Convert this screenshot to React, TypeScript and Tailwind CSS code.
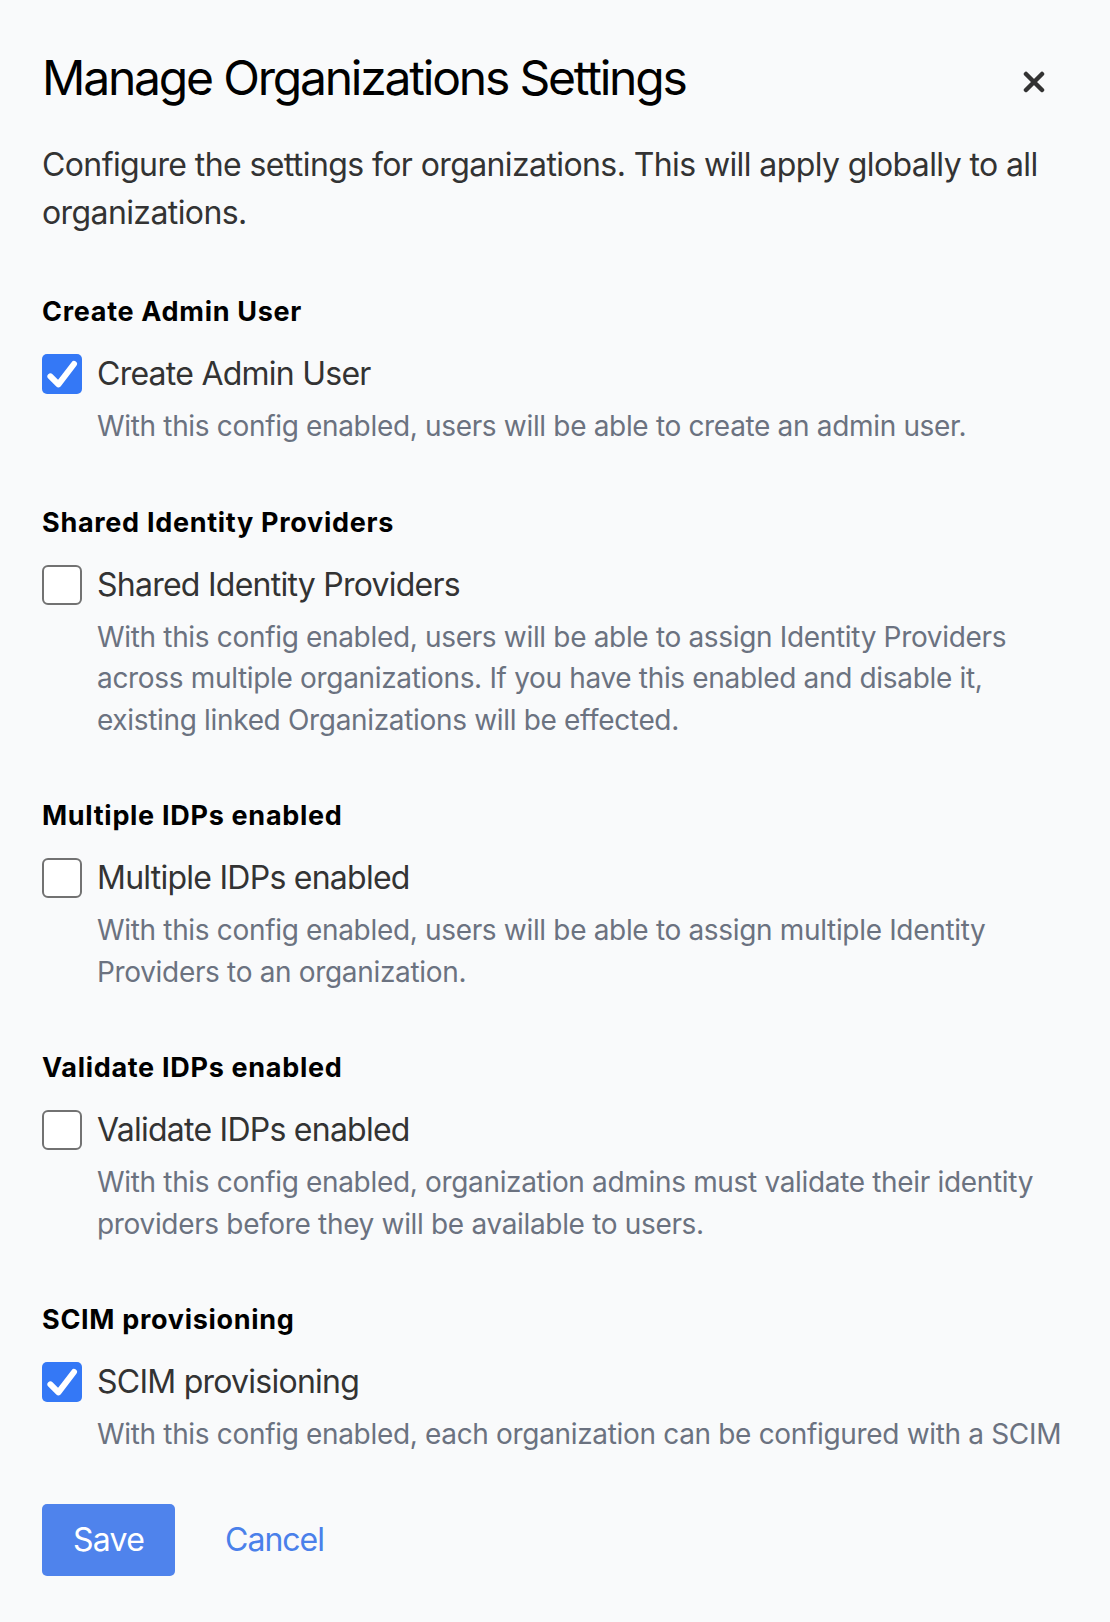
import { useState } from 'react';

interface Setting {
  key: string;
  title: string;
  description: string;
}

const settings: Setting[] = [
  {
    key: 'createAdminUser',
    title: 'Create Admin User',
    description: 'With this config enabled, users will be able to create an admin user.',
  },
  {
    key: 'sharedIdentityProviders',
    title: 'Shared Identity Providers',
    description:
      'With this config enabled, users will be able to assign Identity Providers across multiple organizations. If you have this enabled and disable it, existing linked Organizations will be effected.',
  },
  {
    key: 'multipleIdps',
    title: 'Multiple IDPs enabled',
    description:
      'With this config enabled, users will be able to assign multiple Identity Providers to an organization.',
  },
  {
    key: 'validateIdps',
    title: 'Validate IDPs enabled',
    description:
      'With this config enabled, organization admins must validate their identity providers before they will be available to users.',
  },
  {
    key: 'scimProvisioning',
    title: 'SCIM provisioning',
    description:
      'With this config enabled, each organization can be configured with a SCIM endpoint to provision users and groups.',
  },
];

function Checkbox({ checked, onToggle }: { checked: boolean; onToggle: () => void }) {
  if (checked) {
    return (
      <button
        type="button"
        onClick={onToggle}
        className="flex h-[40px] w-[40px] shrink-0 items-center justify-center rounded-[5px] bg-[#3478f6]"
      >
        <svg viewBox="0 0 20 20" className="h-[40px] w-[40px]" fill="none">
          <path d="M4.2 11.2 L8.2 15.2 L16 5" stroke="white" strokeWidth="3" strokeLinecap="round" strokeLinejoin="round" />
        </svg>
      </button>
    );
  }
  return (
    <button
      type="button"
      onClick={onToggle}
      className="h-[40px] w-[40px] shrink-0 rounded-[6px] border-2 border-[#727272] bg-white"
    />
  );
}

export default function App() {
  const [values, setValues] = useState<Record<string, boolean>>({
    createAdminUser: true,
    sharedIdentityProviders: false,
    multipleIdps: false,
    validateIdps: false,
    scimProvisioning: true,
  });

  const toggle = (key: string) => setValues((v) => ({ ...v, [key]: !v[key] }));

  return (
    <div className="flex h-[1622px] flex-col bg-[#f9fafb] px-[42px] font-['Inter',sans-serif]">
      <div className="flex items-center justify-between pt-[50px]">
        <h1 className="text-[48px] leading-[56px] tracking-[-2.2px] text-black">Manage Organizations Settings</h1>
        <button type="button" className="mr-[23px] mt-2 text-[#333]">
          <svg viewBox="0 0 22 22" className="h-[22px] w-[22px]" fill="none">
            <path d="M3 3 L19 19 M19 3 L3 19" stroke="currentColor" strokeWidth="4.5" strokeLinecap="round" />
          </svg>
        </button>
      </div>

      <div className="min-h-0 flex-1 overflow-hidden">
        <p className="mt-[35px] text-[32px] leading-[48px] tracking-[-0.6px] text-[#333]">
          Configure the settings for organizations. This will apply globally to all organizations.
        </p>

        {settings.map((setting) => (
          <div key={setting.key} className="mt-[57px]">
            <h3 className="text-[27px] font-bold leading-[36px] tracking-[0.7px] text-black">{setting.title}</h3>
            <div className="mt-5 flex h-[48px] items-center gap-[15px]">
              <Checkbox checked={values[setting.key]} onToggle={() => toggle(setting.key)} />
              <span className="text-[32px] leading-[48px] tracking-[-0.75px] text-[#333]">{setting.title}</span>
            </div>
            <p className="mt-2 pl-[55px] text-[28px] leading-[41.5px] tracking-[-0.33px] text-[#6b7280]">
              {setting.description}
            </p>
          </div>
        ))}
      </div>

      <div className="flex items-center gap-[50px] pb-[46px] pt-[44px]">
        <button
          type="button"
          className="h-[72px] rounded-[5px] bg-[#4f83ec] px-[31px] text-[32px] tracking-[-0.75px] text-white"
        >
          Save
        </button>
        <button type="button" className="text-[32px] tracking-[-1px] text-[#4a80ea]">
          Cancel
        </button>
      </div>
    </div>
  );
}
